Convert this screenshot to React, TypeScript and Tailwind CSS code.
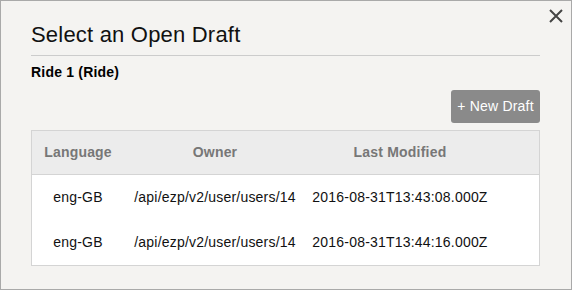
import React from "react";

const drafts = [
  { lang: "eng-GB", owner: "/api/ezp/v2/user/users/14", modified: "2016-08-31T13:43:08.000Z" },
  { lang: "eng-GB", owner: "/api/ezp/v2/user/users/14", modified: "2016-08-31T13:44:16.000Z" },
];

const cols = "grid grid-cols-[92px_182px_188px_1fr]";

export default function App() {
  return (
    <div
      className="relative w-[572px] h-[290px] border border-[#a9a9a9] bg-[#f4f3f1] pl-[30px] pr-[31px] pt-[21px] tracking-[0.2px]"
      style={{ fontFamily: '"Liberation Sans", Arial, sans-serif' }}
    >
      {/* close */}
      <button className="absolute top-[8px] right-[8px] w-[14px] h-[14px] text-[#444]">
        <svg width="14" height="14" viewBox="0 0 14 14" fill="none" stroke="currentColor" strokeWidth="2">
          <path d="M1 1L13 13M13 1L1 13" />
        </svg>
      </button>

      <h1 className="text-[22px] leading-[26px] text-[#111]">Select an Open Draft</h1>
      <div className="mt-[7px] h-px bg-[#cccccc]" />
      <h2 className="mt-[6px] text-[14px] leading-[20px] font-bold text-black">Ride 1 (Ride)</h2>

      <div className="mt-[8px] flex justify-end">
        <button className="w-[89px] h-[33px] rounded-[3px] bg-[#8a8a8a] text-white text-[14px] tracking-[0.2px]">
          + New Draft
        </button>
      </div>

      <div className="mt-[7px] border border-[#d4d4d4] bg-white text-[14px]">
        <div className={`${cols} h-[44px] items-center bg-[#ececec] border-b border-[#d4d4d4] font-bold text-[#777]`}>
          <div className="text-center">Language</div>
          <div className="text-center">Owner</div>
          <div className="text-center">Last Modified</div>
          <div />
        </div>
        {drafts.map((d, i) => (
          <div key={i} className={`${cols} h-[45px] items-center text-[#111]`}>
            <div className="text-center">{d.lang}</div>
            <div className="text-center whitespace-nowrap">{d.owner}</div>
            <div className="text-center whitespace-nowrap">{d.modified}</div>
            <div />
          </div>
        ))}
      </div>
    </div>
  );
}
